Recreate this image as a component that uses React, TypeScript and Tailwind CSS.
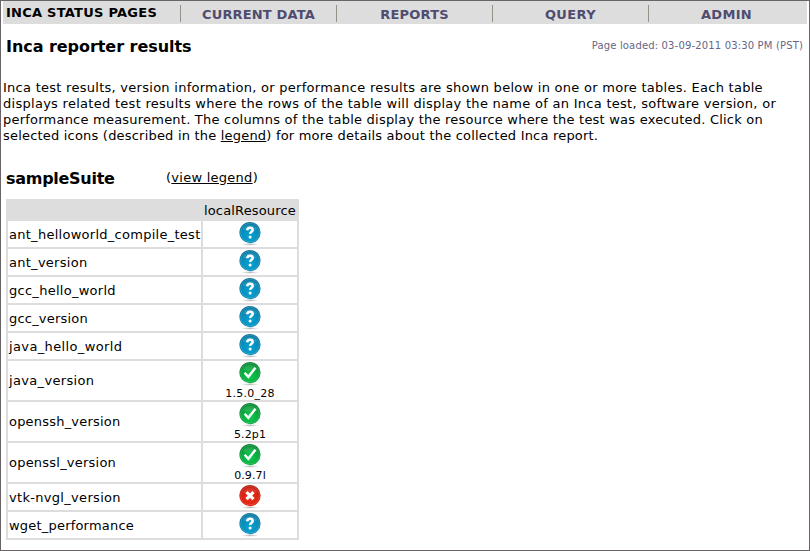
import type { ReactNode } from "react";

type Status = "unknown" | "pass" | "fail";

interface Row {
  name: string;
  nameClass: string;
  status: Status;
  value?: string;
  valueClass?: string;
}

const rows: Row[] = [
  { name: "ant_helloworld_compile_test", nameClass: "tracking-[0.27px]", status: "unknown" },
  { name: "ant_version", nameClass: "tracking-[0.27px]", status: "unknown" },
  { name: "gcc_hello_world", nameClass: "tracking-[0.27px]", status: "unknown" },
  { name: "gcc_version", nameClass: "tracking-[0.2px]", status: "unknown" },
  { name: "java_hello_world", nameClass: "tracking-[0.37px]", status: "unknown" },
  { name: "java_version", nameClass: "tracking-[0.33px]", status: "pass", value: "1.5.0_28", valueClass: "tracking-[0.25px]" },
  { name: "openssh_version", nameClass: "tracking-[0.2px]", status: "pass", value: "5.2p1", valueClass: "tracking-[0.1px]" },
  { name: "openssl_version", nameClass: "tracking-[0.22px]", status: "pass", value: "0.9.7l", valueClass: "tracking-[0.1px]" },
  { name: "vtk-nvgl_version", nameClass: "tracking-[0.31px]", status: "fail" },
  { name: "wget_performance", nameClass: "tracking-[0.2px]", status: "unknown" },
];

const colors: Record<Status, [string, string, string]> = {
  unknown: ["#0b6f98", "#078dba", "#08a2d2"],
  pass: ["#0c7c34", "#08a63c", "#0ccf50"],
  fail: ["#b81c10", "#da2010", "#ee3018"],
};

function StatusIcon({ status }: { status: Status }) {
  const [edge, mid, glow] = colors[status];
  return (
    <svg width="24" height="24" viewBox="0 0 24 24" className="block shrink-0">
      <defs>
        <radialGradient id={`ball-${status}`} cx="0.5" cy="0.66" r="0.66">
          <stop offset="0" stopColor={glow} />
          <stop offset="0.62" stopColor={mid} />
          <stop offset="1" stopColor={edge} />
        </radialGradient>
        <radialGradient id={`shade-${status}`}>
          <stop offset="0" stopColor="#999" stopOpacity="0.7" />
          <stop offset="1" stopColor="#999" stopOpacity="0" />
        </radialGradient>
      </defs>
      <ellipse cx="12" cy="22.4" rx="9" ry="1.4" fill={`url(#shade-${status})`} />
      <circle cx="12" cy="10.6" r="10.6" fill={`url(#ball-${status})`} />
      <circle cx="12" cy="10.6" r="9.3" fill="none" stroke="#fff" strokeOpacity="0.2" strokeWidth="0.8" />
      <path d="M4.5 7.5a8.3 8.3 0 0 1 15 0q-7.5 2.5-15 0z" fill="#fff" fillOpacity="0.1" />
      {status === "unknown" && (
        <g>
          <path d="M9.3 8.2c.1-1.7 1.2-2.4 2.7-2.4s2.7.8 2.7 2.2c0 1.8-2.5 1.8-2.5 3.9" fill="none" stroke="#fff" strokeWidth="2.5" />
          <circle cx="12.1" cy="15" r="1.5" fill="#fff" />
        </g>
      )}
      {status === "pass" && <path d="M6.6 10.8l3.7 4 7.2-9" fill="none" stroke="#fff" strokeWidth="2.4" />}
      {status === "fail" && <path d="M8.5 7.1l7 7M15.5 7.1l-7 7" fill="none" stroke="#fff" strokeWidth="3.1" />}
    </svg>
  );
}

function Tab({ children, tracking }: { children: ReactNode; tracking: string }) {
  return (
    <div className="flex h-[23px] w-[156px] items-start justify-center">
      <div className="mt-[4px] h-[17px] w-px bg-[#929288]" />
      <div className={`mt-[5px] flex-1 whitespace-nowrap text-center text-[13px] leading-[17px] font-bold text-[#504c70] ${tracking}`}>
        {children}
      </div>
    </div>
  );
}

export default function App() {
  return (
    <div className="h-[551px] w-[810px] overflow-hidden border border-[#686468] bg-white font-['DejaVu_Sans',sans-serif] text-[13px] text-black">
      <div className="ml-[2px] flex h-[23px] w-[804px] bg-[#dddddd]">
        <div className="w-[177px] shrink-0 pt-[3px] pl-[3px] leading-[17px] font-bold tracking-[0.25px] whitespace-nowrap">INCA STATUS PAGES</div>
        <Tab tracking="tracking-[0.17px]">CURRENT DATA</Tab>
        <Tab tracking="tracking-[0.2px]">REPORTS</Tab>
        <Tab tracking="tracking-[0.4px]">QUERY</Tab>
        <Tab tracking="tracking-[0.3px]">ADMIN</Tab>
      </div>
      <div className="flex h-[56px] justify-between pt-[13px] pr-[6px] pl-[5px]">
        <h1 className="text-[16px] leading-[20px] font-bold tracking-[-0.05px] whitespace-nowrap">Inca reporter results</h1>
        <span className="mt-[1px] text-[10px] leading-[16px] tracking-[0.16px] whitespace-nowrap text-[#666688]">Page loaded: 03-09-2011 03:30 PM (PST)</span>
      </div>
      <div className="h-[91px] pl-[2px] leading-[16px] whitespace-nowrap">
        <div className="tracking-[0.27px]">Inca test results, version information, or performance results are shown below in one or more tables. Each table</div>
        <div className="tracking-[0.28px]">displays related test results where the rows of the table will display the name of an Inca test, software version, or</div>
        <div className="tracking-[0.22px]">performance measurement. The columns of the table display the resource where the test was executed. Click on</div>
        <div className="tracking-[0.2px]">selected icons (described in the <a className="underline">legend</a>) for more details about the collected Inca report.</div>
      </div>
      <div className="flex h-[28px] pl-[5px] whitespace-nowrap">
        <h2 className="w-[160px] text-[16px] leading-[16px] font-bold tracking-[-0.28px]">sampleSuite</h2>
        <span className="leading-[14px] tracking-[0.26px]">(<a className="underline">view legend</a>)</span>
      </div>
      <div className="ml-[5px] w-[293px] bg-[#dddddd] pb-[2px] whitespace-nowrap">
        <div className="flex h-[22px] pl-[198px] leading-[23px] tracking-[0.15px]">localResource</div>
        <div className="grid gap-[2px] px-[2px]">
          {rows.map((row) => (
            <div key={row.name} className={`flex gap-[2px] ${row.value ? "h-[39px]" : "h-[26px]"}`}>
              <div className={`flex w-[193px] items-center bg-white pl-px leading-[16px] ${row.value ? "" : "pt-[2px]"}`}>
                <span className={row.nameClass}>{row.name}</span>
              </div>
              <div className="flex w-[94px] flex-col items-center bg-white pt-px">
                <StatusIcon status={row.status} />
                {row.value && <span className={`text-[11px] leading-[15px] ${row.valueClass}`}>{row.value}</span>}
              </div>
            </div>
          ))}
        </div>
      </div>
    </div>
  );
}
